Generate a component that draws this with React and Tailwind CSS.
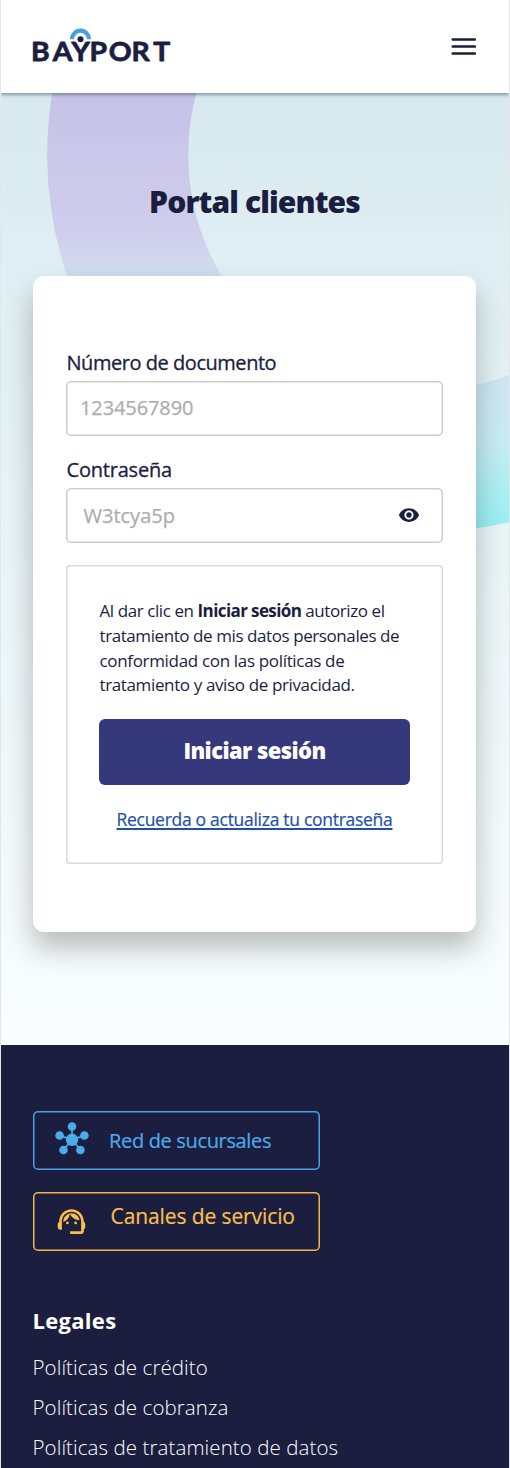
import { MdSupportAgent, MdVisibility } from "react-icons/md";

function Logo() {
  return (
    <svg width="144" height="40" viewBox="30 26 144 40" role="img" aria-label="Bayport">
      <g transform="scale(1.03 1)" fill="#1b1e3f" stroke="#1b1e3f" strokeWidth="0.8" strokeLinejoin="round" fontFamily="Lato, sans-serif" fontWeight="700" fontSize="27.5">
        <text y="61.5" x="30.2 51.3 69.4 87 105.6 127.8 148.8">BAYPORT</text>
      </g>
      <path d="M72 39.2a8.5 8.5 0 0 1 17 0" fill="none" stroke="#459fe0" strokeWidth="4.2" />
      <circle cx="80.5" cy="39.2" r="4.6" fill="#fff" />
      <circle cx="80.5" cy="39.2" r="3" fill="#1b1e3f" />
    </svg>
  );
}

function HubIcon() {
  return (
    <svg width="34" height="36" viewBox="0 0 34 36" fill="#4cabeb" className="mr-[20px]">
      <path d="M17 17.5V4.5M17 17.5L4.6 13.6M17 17.5L29.4 13.6M17 17.5L8.5 28M17 17.5L25.4 28" stroke="#4cabeb" strokeWidth="1.7" />
      <circle cx="17" cy="17.8" r="6.2" />
      <circle cx="17" cy="4.5" r="4.3" />
      <circle cx="4.6" cy="13.5" r="4.3" />
      <circle cx="29.4" cy="13.5" r="4.3" />
      <circle cx="8.5" cy="28" r="4.3" />
      <circle cx="25.4" cy="28" r="4.3" />
    </svg>
  );
}

function Header() {
  return (
    <header className="relative z-10 flex h-[93px] shrink-0 items-start justify-between bg-white pl-[29px] pr-[32px] pt-[26px] shadow-[0_2px_3px_rgba(40,60,70,0.45)]">
      <Logo />
      <svg width="27" height="20" viewBox="0 0 27 20" className="mt-[10px]" aria-label="Menú">
        <path d="M2.8 3.5h22M2.8 10.5h22M2.8 17.5h22" stroke="#1b1e3f" strokeWidth="2.7" strokeLinecap="round" />
      </svg>
    </header>
  );
}

function Ring() {
  return (
    <svg className="absolute inset-0" width="508" height="951" viewBox="1 93 508 951">
      <defs>
        <linearGradient id="ring" gradientUnits="userSpaceOnUse" x1="0" y1="93" x2="0" y2="530">
          <stop offset="0" stopColor="#c6c2e8" />
          <stop offset="0.32" stopColor="#cfcdec" />
          <stop offset="0.37" stopColor="#d1d6ee" />
          <stop offset="0.42" stopColor="#cfddef" />
          <stop offset="0.67" stopColor="#cde6f1" />
          <stop offset="0.8" stopColor="#c6ecf2" />
          <stop offset="0.93" stopColor="#a6eff3" />
          <stop offset="1" stopColor="#98eef3" />
        </linearGradient>
      </defs>
      <circle cx="424" cy="155" r="306.3" fill="none" stroke="url(#ring)" strokeWidth="141" />
    </svg>
  );
}

function LoginCard() {
  return (
    <form className="relative mt-[56px] flex h-[656px] flex-col rounded-[11px] bg-white px-[33px] pt-[75px] text-[20px] leading-[24px] text-[#1b1e3f] shadow-[0_16px_28px_rgba(0,0,0,0.25)]">
      <label className="pl-[0.5px] tracking-[-0.46px] [-webkit-text-stroke:0.3px_#1b1e3f]">Número de documento</label>
      <div className="mt-[5.5px] flex h-[55px] items-center rounded-[5px] px-[14px] tracking-[-0.1px] text-[#adadad] shadow-[inset_0_0_0_1.5px_#cdcdcd] [-webkit-text-stroke:0.25px_#adadad]">
        1234567890
      </div>
      <label className="mt-[22px] pl-[0.5px] tracking-[-0.2px] [-webkit-text-stroke:0.3px_#1b1e3f]">Contraseña</label>
      <div className="mt-[6.5px] flex h-[55px] items-center justify-between rounded-[5px] pl-[17.5px] pr-[23px] text-[#adadad] shadow-[inset_0_0_0_1.5px_#cdcdcd]">
        <span className="[-webkit-text-stroke:0.25px_#adadad]">W3tcya5p</span>
        <MdVisibility className="-mt-px size-[22px] text-[#1b1e3f]" />
      </div>
      <div className="mt-[22px] flex h-[299px] flex-col rounded-[4px] px-[33px] pt-[34px] shadow-[inset_0_0_0_1.5px_#dadada]">
        <p className="whitespace-nowrap pl-[0.5px] text-[17px] leading-[24.8px] tracking-[-0.42px]">
          Al dar clic en <b className="tracking-[-0.6px]">Iniciar sesión</b> autorizo el
          <br />
          tratamiento de mis datos personales de
          <br />
          <span className="tracking-[-0.33px]">conformidad con las políticas de</span>
          <br />
          <span className="tracking-[-0.37px]">tratamiento y aviso de privacidad.</span>
        </p>
        <button type="button" className="mt-[20.5px] h-[66px] shrink-0 rounded-[6px] bg-[#35387a] pb-[4px] text-[22px] font-extrabold tracking-[-0.6px] text-white">
          Iniciar sesión
        </button>
        <a className="mt-[22px] self-center whitespace-nowrap text-[17.5px] leading-[24px] tracking-[-0.29px] text-[#1f51ab] underline decoration-[1.5px] underline-offset-[2px] [text-decoration-skip-ink:none] [-webkit-text-stroke:0.2px_#1f51ab]">
          Recuerda o actualiza tu contraseña
        </a>
      </div>
    </form>
  );
}

function Footer() {
  return (
    <footer className="flex grow flex-col bg-[#1b1e3f] px-[32px] pt-[66px] text-white">
      <a className="flex h-[59px] w-[287px] shrink-0 items-center rounded-[5px] pl-[22px] text-[20px] leading-[24px] tracking-[-0.34px] text-[#4cabeb] shadow-[inset_0_0_0_1.5px_#46a4e6]">
        <HubIcon />
        <span className="pt-[2px] [-webkit-text-stroke:0.2px_#4cabeb]">Red de sucursales</span>
      </a>
      <a className="mt-[22px] flex h-[59px] w-[287px] shrink-0 items-start rounded-[5px] pl-[22px] pt-[12px] text-[21px] leading-[24px] tracking-[-0.1px] text-[#f9bf4a] shadow-[inset_0_0_0_1.5px_#f2b742]">
        <MdSupportAgent className="mr-[22.5px] mt-px size-[33px]" />
        <span className="[-webkit-text-stroke:0.2px_#f9bf4a]">Canales de servicio</span>
      </a>
      <h2 className="-ml-[0.5px] mt-[55px] text-[22px] font-bold leading-[28px] tracking-[0.3px]">Legales</h2>
      <ul className="-ml-[0.5px] mt-[13px] whitespace-nowrap text-[20.5px] font-light leading-[40px] tracking-[0.08px]">
        <li>Políticas de crédito</li>
        <li>Políticas de cobranza</li>
        <li>Políticas de tratamiento de datos</li>
      </ul>
    </footer>
  );
}

export default function App() {
  return (
    <div className="flex h-[1468px] w-[510px] flex-col overflow-hidden border-x border-[#e4e6e9] bg-white font-['Open_Sans',sans-serif]">
      <Header />
      <main className="relative flex h-[951.5px] shrink-0 flex-col overflow-hidden bg-[linear-gradient(#d7e9ef,#e0eff3_20%,#e9f4f6_48%,#f5fbfc_86%,#f9fdfd)] pl-[32px] pr-[33px] pt-[91px]">
        <Ring />
        <h1 className="relative text-center text-[30px] font-extrabold leading-[36px] tracking-[-0.9px] text-[#1b1e3f]">Portal clientes</h1>
        <LoginCard />
      </main>
      <Footer />
    </div>
  );
}
